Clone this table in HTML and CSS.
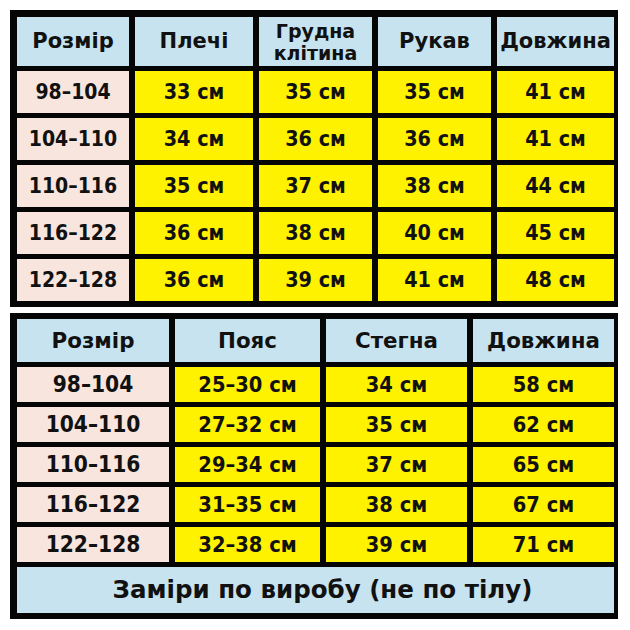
FILE: index.html
```html
<!DOCTYPE html>
<html lang="uk">
<head>
<meta charset="utf-8">
<title>Розмірна сітка</title>
<link rel="stylesheet" href="styles.css">
</head>
<body>
<div class="page">
  <div class="chart chart-top">
    <div class="cell head">Розмір</div>
    <div class="cell head">Плечі</div>
    <div class="cell head small">Грудна<br>клітина</div>
    <div class="cell head">Рукав</div>
    <div class="cell head">Довжина</div>

    <div class="cell size">98–104</div>
    <div class="cell val">33 см</div>
    <div class="cell val">35 см</div>
    <div class="cell val">35 см</div>
    <div class="cell val">41 см</div>

    <div class="cell size">104–110</div>
    <div class="cell val">34 см</div>
    <div class="cell val">36 см</div>
    <div class="cell val">36 см</div>
    <div class="cell val">41 см</div>

    <div class="cell size">110–116</div>
    <div class="cell val">35 см</div>
    <div class="cell val">37 см</div>
    <div class="cell val">38 см</div>
    <div class="cell val">44 см</div>

    <div class="cell size">116–122</div>
    <div class="cell val">36 см</div>
    <div class="cell val">38 см</div>
    <div class="cell val">40 см</div>
    <div class="cell val">45 см</div>

    <div class="cell size">122–128</div>
    <div class="cell val">36 см</div>
    <div class="cell val">39 см</div>
    <div class="cell val">41 см</div>
    <div class="cell val">48 см</div>
  </div>

  <div class="chart chart-bottom">
    <div class="cell head">Розмір</div>
    <div class="cell head">Пояс</div>
    <div class="cell head">Стегна</div>
    <div class="cell head">Довжина</div>

    <div class="cell size">98–104</div>
    <div class="cell val">25–30 см</div>
    <div class="cell val">34 см</div>
    <div class="cell val">58 см</div>

    <div class="cell size">104–110</div>
    <div class="cell val">27–32 см</div>
    <div class="cell val">35 см</div>
    <div class="cell val">62 см</div>

    <div class="cell size">110–116</div>
    <div class="cell val">29–34 см</div>
    <div class="cell val">37 см</div>
    <div class="cell val">65 см</div>

    <div class="cell size">116–122</div>
    <div class="cell val">31–35 см</div>
    <div class="cell val">38 см</div>
    <div class="cell val">67 см</div>

    <div class="cell size">122–128</div>
    <div class="cell val">32–38 см</div>
    <div class="cell val">39 см</div>
    <div class="cell val">71 см</div>

    <div class="cell note">Заміри по виробу (не по тілу)</div>
  </div>
</div>
</body>
</html>
```
FILE: styles.css
```css
html, body {
  margin: 0;
  padding: 0;
  background: #ffffff;
}

.page {
  padding: 10px 12px 0 10px;
  display: flex;
  flex-direction: column;
  gap: 6px;
  font-family: "DejaVu Sans", sans-serif;
  font-weight: bold;
  color: #111111;
}

.chart {
  display: grid;
  background: #050505;
  width: 608px;
  box-sizing: border-box;
}

.chart-top {
  grid-template-columns: 112px 118px 113px 113px 117px;
  grid-template-rows: 49px repeat(5, 42px);
  column-gap: 6px;
  row-gap: 5px;
  padding: 7px 4px 6px 7px;
}

.chart-bottom {
  grid-template-columns: 152px 145px 141px 141px;
  grid-template-rows: 43px repeat(5, 35px) 46px;
  column-gap: 6px;
  row-gap: 5px;
  padding: 6px 4px 6px 7px;
}

.cell {
  display: flex;
  align-items: center;
  justify-content: center;
  text-align: center;
  line-height: 1;
  font-stretch: condensed;
}

.head {
  background: #c6e3ef;
  font-stretch: normal;
  font-size: 21px;
}

.chart-bottom .head {
  font-size: 21.4px;
}

.head.small {
  font-size: 19px;
  line-height: 22px;
}

.size {
  background: #f8e5dd;
  font-size: 21px;
}

.chart-bottom .size {
  font-size: 22.5px;
}

.val {
  background: #fff200;
  font-size: 21.4px;
}

.chart-bottom .val {
  font-size: 21.7px;
}

.note {
  grid-column: 1 / -1;
  background: #c6e3ef;
  font-stretch: normal;
  font-size: 24.5px;
  padding-left: 14px;
}
```
